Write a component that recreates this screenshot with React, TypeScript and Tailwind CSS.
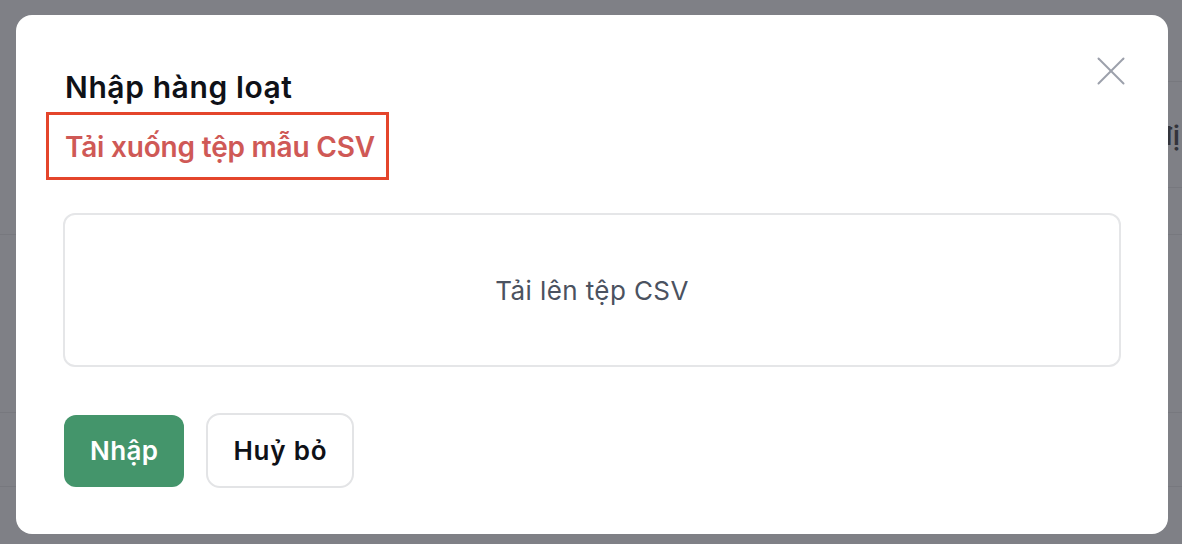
import React from 'react';

function CloseIcon() {
  return (
    <svg width="28" height="28" viewBox="0 0 28 28" fill="none" stroke="#9ca0ab" strokeWidth="2" strokeLinecap="round">
      <line x1="1.5" y1="1.5" x2="26.5" y2="26.5" />
      <line x1="26.5" y1="1.5" x2="1.5" y2="26.5" />
    </svg>
  );
}

export default function App() {
  return (
    <div className="relative w-[1182px] h-[544px] overflow-hidden bg-[#7f8086] font-['Inter','Noto_Sans',sans-serif]">
      {/* page behind the overlay */}
      <div className="flex flex-col">
        <div className="h-[82px] flex">
          <div className="ml-[1168px] flex-1 border-b border-[#77787e]" />
        </div>
        <div className="h-[106px] flex items-center relative">
          <span className="ml-[1156px] text-[26px] font-semibold text-[#33343b] whitespace-nowrap">đị</span>
          <div className="absolute left-[1168px] right-0 bottom-0 border-b border-[#77787e]" />
        </div>
        <div className="h-[47px] border-b border-[#77787e]" />
        <div className="h-[178px] border-b border-[#77787e]" />
        <div className="h-[74px] border-b border-[#77787e]" />
      </div>

      {/* modal */}
      <div className="absolute left-[16px] top-[15px] w-[1152px] h-[519px] bg-white rounded-[16px] px-[47px] pt-[54px]">
        <button className="absolute right-[43px] top-[42px]">
          <CloseIcon />
        </button>

        <h2 className="pl-[2px] text-[30px] leading-[36px] font-semibold tracking-[0.6px] text-[#0f1117]">
          Nhập hàng loạt
        </h2>

        <div className="mt-[24px] pl-[2px]">
          <span className="relative inline-block text-[28px] leading-[36px] font-semibold tracking-[-0.2px] text-[#cf5956]">
            Tải xuống tệp mẫu CSV
            <span className="absolute -left-[19px] -top-[17px] -right-[14px] -bottom-[15px] border-[3px] border-[#e4452b]" />
          </span>
        </div>

        <div className="mt-[48px] h-[154px] rounded-[12px] border-2 border-[#e5e6e8] flex items-center justify-center">
          <span className="text-[26px] tracking-[0.4px] text-[#4b5260]">Tải lên tệp CSV</span>
        </div>

        <div className="mt-[46px] ml-[1px] flex items-center gap-[22px]">
          <button className="h-[72px] px-[26px] rounded-[12px] bg-[#44956b] text-white text-[26px] font-semibold tracking-[0.4px]">
            Nhập
          </button>
          <button className="h-[75px] px-[25px] rounded-[14px] border-2 border-[#e3e4e6] bg-white text-[#0f1117] text-[26px] font-semibold tracking-[0.8px]">
            Huỷ bỏ
          </button>
        </div>
      </div>
    </div>
  );
}
